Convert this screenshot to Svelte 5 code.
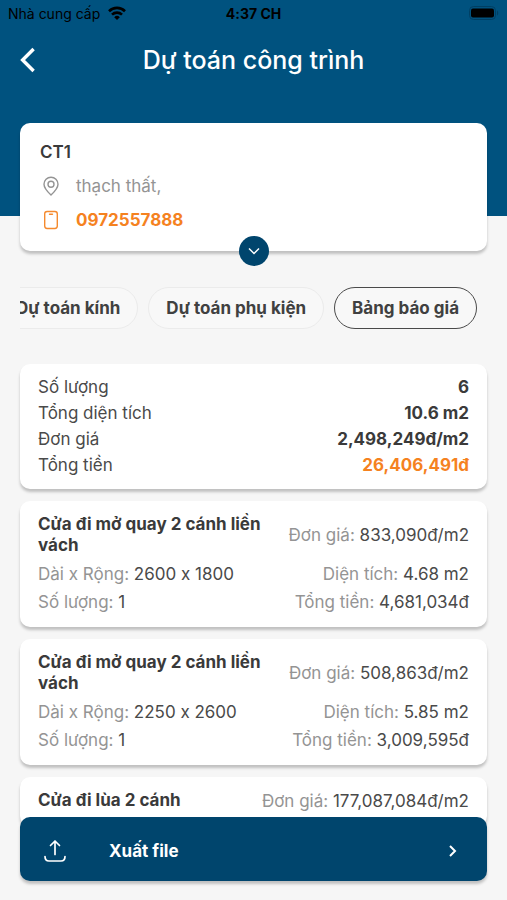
<script>
	const project = {
		name: 'CT1',
		address: 'thạch thất,',
		phone: '0972557888'
	};

	const tabs = ['Dự toán kính', 'Dự toán phụ kiện', 'Bảng báo giá'];
	let activeTab = $state('Bảng báo giá');

	const summary = [
		{ label: 'Số lượng', value: '6' },
		{ label: 'Tổng diện tích', value: '10.6 m2' },
		{ label: 'Đơn giá', value: '2,498,249đ/m2' },
		{ label: 'Tổng tiền', value: '26,406,491đ', highlight: true }
	];

	const items = [
		{
			name: 'Cửa đi mở quay 2 cánh liền vách',
			price: '833,090đ/m2',
			size: '2600 x 1800',
			area: '4.68 m2',
			quantity: 1,
			total: '4,681,034đ'
		},
		{
			name: 'Cửa đi mở quay 2 cánh liền vách',
			price: '508,863đ/m2',
			size: '2250 x 2600',
			area: '5.85 m2',
			quantity: 1,
			total: '3,009,595đ'
		},
		{
			name: 'Cửa đi lùa 2 cánh',
			price: '177,087,084đ/m2'
		}
	];
</script>

<div class="screen">
	<header>
		<div class="status">
			<span class="carrier">
				Nhà cung cấp
				<svg width="18" height="14" viewBox="0 0 18 14" fill="none" stroke="#000" stroke-width="2.6">
					<path d="M1 5.2a11.4 11.4 0 0 1 16 0" />
					<path d="M4 8.6a7.2 7.2 0 0 1 10 0" />
					<path d="M9 14 6.2 11.2a4 4 0 0 1 5.6 0z" fill="#000" stroke="none" />
				</svg>
			</span>
			<strong>4:37 CH</strong>
			<svg class="battery" width="30" height="14" viewBox="0 0 30 14">
				<rect x="0.5" y="0.5" width="26" height="13" rx="4" fill="none" stroke="#003f63" />
				<rect x="2" y="2.5" width="23" height="9" rx="2" />
				<path d="M28 4.5c1.6.6 1.6 4.4 0 5z" fill="#003f63" />
			</svg>
		</div>

		<div class="title-bar">
			<button type="button" class="back" aria-label="Quay lại">
				<svg width="16" height="26" viewBox="0 0 16 26" fill="none" stroke="#fff" stroke-width="3.4">
					<path d="M13.6 2 2.6 13l11 11" />
				</svg>
			</button>
			<h1>Dự toán công trình</h1>
		</div>
	</header>

	<section class="card project">
		<h2>{project.name}</h2>
		<div class="contact">
			<svg width="22" height="22" viewBox="0 0 22 22" fill="none" stroke="#949494" stroke-width="1.4">
				<path d="M11 20C7.8 17 4 13.2 4 9.2a7 7 0 0 1 14 0c0 4-3.8 7.8-7 10.8z" />
				<circle cx="11" cy="9.2" r="3" />
			</svg>
			<span>{project.address}</span>
		</div>
		<div class="contact">
			<svg width="22" height="22" viewBox="0 0 22 22" fill="none" stroke="#f58a2e" stroke-width="1.4">
				<rect x="4.7" y="2.5" width="12.6" height="17" rx="2.4" />
				<path d="M9.5 5.2h3" stroke-linecap="round" />
			</svg>
			<a href="tel:{project.phone}">{project.phone}</a>
		</div>
		<button type="button" class="expand" aria-label="Xem thêm">
			<svg width="12" height="8" viewBox="0 0 12 8" fill="none" stroke="#fff" stroke-width="1.5">
				<path d="m1 1.5 5 5 5-5" />
			</svg>
		</button>
	</section>

	<nav>
		{#each tabs as tab}
			<button type="button" class:active={tab === activeTab} onclick={() => (activeTab = tab)}>
				{tab}
			</button>
		{/each}
	</nav>

	<main>
		<dl class="card summary">
			{#each summary as row}
				<div>
					<dt>{row.label}</dt>
					<dd class:highlight={row.highlight}>{row.value}</dd>
				</div>
			{/each}
		</dl>

		{#each items as item}
			<article class="card item">
				<div class="row">
					<h3>{item.name}</h3>
					<p>Đơn giá: <span>{item.price}</span></p>
				</div>
				{#if item.size}
					<div class="row">
						<p>Dài x Rộng: <span>{item.size}</span></p>
						<p>Diện tích: <span>{item.area}</span></p>
					</div>
					<div class="row">
						<p>Số lượng: <span>{item.quantity}</span></p>
						<p>Tổng tiền: <span>{item.total}</span></p>
					</div>
				{/if}
			</article>
		{/each}
	</main>

	<button type="button" class="export">
		<svg width="24" height="24" viewBox="0 0 24 24" fill="none" stroke="#fff" stroke-width="1.7" stroke-linecap="round" stroke-linejoin="round">
			<path d="M12 15.5V2.5M7.5 6.5 12 2l4.5 4.5" />
			<path d="M2 17.5c0 3 1.2 4.5 4 4.5h12c2.8 0 4-1.5 4-4.5" />
		</svg>
		<span>Xuất file</span>
		<svg width="10" height="14" viewBox="0 0 10 14" fill="none" stroke="#fff" stroke-width="2">
			<path d="m2 2 5 5-5 5" />
		</svg>
	</button>
</div>

<style>
	:global(body) {
		margin: 0;
		background: #f6f6f6;
	}

	.screen {
		display: flex;
		flex-direction: column;
		height: 100vh;
		font-family: Inter, 'Noto Sans', sans-serif;
		font-size: 17px;
		font-variant-ligatures: no-contextual;
		color: #4a4a4a;
	}

	button {
		font: inherit;
		border: none;
		padding: 0;
		cursor: pointer;
	}

	svg {
		display: block;
		flex: none;
	}

	h1,
	h2,
	h3,
	p,
	dl,
	dd {
		margin: 0;
	}

	header {
		flex: none;
		padding-bottom: 122px;
		background: #00527f;
	}

	.status {
		display: grid;
		grid-template-columns: 1fr auto 1fr;
		align-items: center;
		height: 26px;
		padding: 0 8px;
		font-size: 14px;
		color: #000;
	}

	.status strong {
		font-weight: 700;
	}

	.carrier {
		display: flex;
		align-items: center;
		gap: 8px;
	}

	.battery {
		justify-self: end;
	}

	.title-bar {
		display: grid;
		grid-template-columns: 36px 1fr 36px;
		align-items: center;
		height: 68px;
		padding: 0 20px;
	}

	.back {
		background: none;
	}

	h1 {
		font-size: 25px;
		font-weight: 500;
		text-align: center;
		color: #fff;
	}

	.card {
		background: #fff;
		border-radius: 10px;
		box-shadow: 0 3px 3px rgba(0, 0, 0, 0.22);
	}

	.project {
		position: relative;
		display: flex;
		flex-direction: column;
		gap: 10px;
		margin: -93px 20px 0;
		padding: 17px 20px 19px;
		line-height: 24px;
	}

	h2 {
		font-size: 17px;
		font-weight: 600;
		color: #3a3a3a;
	}

	.contact {
		display: flex;
		align-items: center;
		gap: 14px;
		color: #949494;
	}

	.contact a {
		font-weight: 700;
		color: #f5821f;
		text-decoration: none;
	}

	.expand {
		position: absolute;
		bottom: -15px;
		left: 50%;
		display: grid;
		place-items: center;
		width: 30px;
		height: 30px;
		border-radius: 50%;
		background: #00456d;
		transform: translateX(-50%);
	}

	nav {
		display: flex;
		flex: none;
		justify-content: flex-end;
		gap: 10px;
		margin: 36px 20px 0;
		padding-right: 10px;
		overflow: hidden;
	}

	nav button {
		flex: none;
		height: 42px;
		padding: 0 17px;
		border: 1px solid #ebebeb;
		border-radius: 21px;
		background: #f8f8f8;
		font-weight: 700;
		color: #404040;
	}

	nav button.active {
		border-color: #4a4a4a;
	}

	main {
		display: flex;
		flex: 1;
		flex-direction: column;
		gap: 12px;
		min-height: 0;
		margin-top: 25px;
		padding: 10px 20px 0;
		overflow-y: auto;
		scrollbar-width: none;
	}

	main .card {
		flex: none;
		padding: 10px 18px 11px;
	}

	.summary div {
		display: flex;
		justify-content: space-between;
		line-height: 26px;
	}

	.summary dd {
		font-weight: 700;
		color: #3a3a3a;
	}

	.summary dd.highlight {
		color: #f5821f;
	}

	main .item {
		display: flex;
		flex-direction: column;
		gap: 8px;
		padding: 13px 18px 15px;
	}

	.row {
		display: flex;
		align-items: center;
		justify-content: space-between;
		gap: 12px;
	}

	h3 {
		font-size: 17px;
		font-weight: 700;
		line-height: 21px;
		color: #3a3a3a;
	}

	.row p {
		line-height: 20px;
		white-space: nowrap;
		color: #949494;
	}

	.row p span {
		color: #4a4a4a;
	}

	.export {
		position: relative;
		display: flex;
		flex: none;
		align-items: center;
		height: 64px;
		margin: -10px 20px 19px;
		padding: 4px 29px 0 23px;
		border-radius: 10px;
		background: #00456d;
		box-shadow: 0 3px 3px rgba(0, 0, 0, 0.22);
		font-weight: 700;
		text-align: left;
		color: #fff;
	}

	.export span {
		flex: 1;
		margin-left: 42px;
	}
</style>
